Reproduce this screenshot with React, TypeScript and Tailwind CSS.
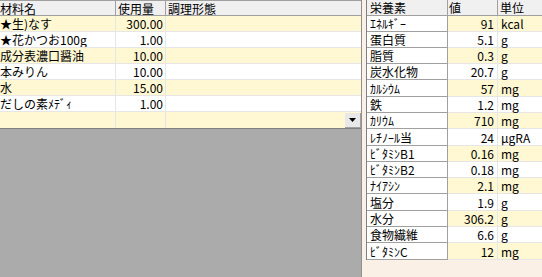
import React from "react";

const leftRows = [
  { name: "★生)なす", amt: "300.00" },
  { name: "★花かつお100g", amt: "1.00" },
  { name: "成分表濃口醤油", amt: "10.00" },
  { name: "本みりん", amt: "10.00" },
  { name: "水", amt: "15.00" },
  { name: "だしの素ﾒﾃﾞｨ", amt: "1.00" },
  { name: "", amt: "" },
];

const rightRows: [string, string, string, number][] = [
  ["ｴﾈﾙｷﾞｰ", "91", "kcal", 16],
  ["蛋白質", "5.1", "g", 16],
  ["脂質", "0.3", "g", 16],
  ["炭水化物", "20.7", "g", 16],
  ["ｶﾙｼｳﾑ", "57", "mg", 17],
  ["鉄", "1.2", "mg", 16],
  ["ｶﾘｳﾑ", "710", "mg", 16],
  ["ﾚﾁﾉｰﾙ当", "24", "μgRA", 17],
  ["ﾋﾞﾀﾐﾝB1", "0.16", "mg", 16],
  ["ﾋﾞﾀﾐﾝB2", "0.18", "mg", 16],
  ["ﾅｲｱｼﾝ", "2.1", "mg", 16],
  ["塩分", "1.9", "g", 17],
  ["水分", "306.2", "g", 16],
  ["食物繊維", "6.6", "g", 16],
  ["ﾋﾞﾀﾐﾝC", "12", "mg", 17],
];

export default function App() {
  return (
    <div
      className="flex w-[542px] h-[277px] overflow-hidden text-[12px] leading-[15px] text-black"
      style={{ fontFamily: '"Noto Sans CJK JP", "Noto Sans", sans-serif' }}
    >
      {/* Left panel */}
      <div className="w-[362px] h-full bg-[#ababab] border-r border-[#8f8f8f] flex flex-col">
        <div className="flex flex-col bg-white border-b border-[#808080]">
          <div className="flex h-[16px] bg-[#f0f0f0] border-t border-b border-[#a0a0a0]">
            <div className="w-[116px] border-r border-[#a0a0a0] pl-[0px] flex items-center">材料名</div>
            <div className="w-[50px] border-r border-[#a0a0a0] pl-[2px] flex items-center">使用量</div>
            <div className="flex-1 pl-[2px] flex items-center">調理形態</div>
          </div>
          {leftRows.map((r, i) => (
            <div
              key={i}
              className={`flex h-[16px] border-b border-[#e6e6e6] ${i % 2 === 0 ? "bg-[#fff8d2]" : "bg-white"} ${i === leftRows.length - 1 ? "border-b-0" : ""}`}
            >
              <div className="w-[116px] border-r border-[#e6e6e6] flex items-center whitespace-nowrap overflow-hidden">{r.name}</div>
              <div className="w-[50px] border-r border-[#e6e6e6] pr-[2px] flex items-center justify-end">{r.amt}</div>
              <div className="flex-1 flex items-center justify-end">
                {i === leftRows.length - 1 && (
                  <div className="w-[16px] h-[15px] bg-[#e8e8e8] border-r border-b border-[#a0a0a0] flex items-center justify-center">
                    <svg width="7" height="4" viewBox="0 0 7 4">
                      <path d="M0 0H7L3.5 4Z" fill="#000" />
                    </svg>
                  </div>
                )}
              </div>
            </div>
          ))}
        </div>
      </div>

      {/* Right panel */}
      <div className="flex-1 h-full bg-[#faf0e6] pl-[4px]">
        <div className="flex flex-col border-l border-[#808080] bg-white">
          <div className="flex h-[16px] bg-[#f0f0f0] border-b border-[#a0a0a0]">
            <div className="w-[81px] border-r border-[#a0a0a0] pl-[3px] flex items-center">栄養素</div>
            <div className="w-[50px] border-r border-[#a0a0a0] pl-[1px] flex items-center">値</div>
            <div className="flex-1 pl-[2px] flex items-center">単位</div>
          </div>
          {rightRows.map(([n, v, u, h], i) => (
            <div key={i} className="flex" style={{ height: h }}>
              <div className="w-[81px] bg-white border-r border-b border-[#a0a0a0] pl-[3px] flex items-center whitespace-nowrap">{n}</div>
              <div className={`w-[50px] border-r border-b border-[#e6e6e6] pr-[3px] flex items-center justify-end ${i % 2 === 0 ? "bg-[#fff8d2]" : "bg-white"}`}>{v}</div>
              <div className={`flex-1 border-b border-[#e6e6e6] pl-[3px] flex items-center ${i % 2 === 0 ? "bg-[#fff8d2]" : "bg-white"}`}>{u}</div>
            </div>
          ))}
        </div>
      </div>
    </div>
  );
}
